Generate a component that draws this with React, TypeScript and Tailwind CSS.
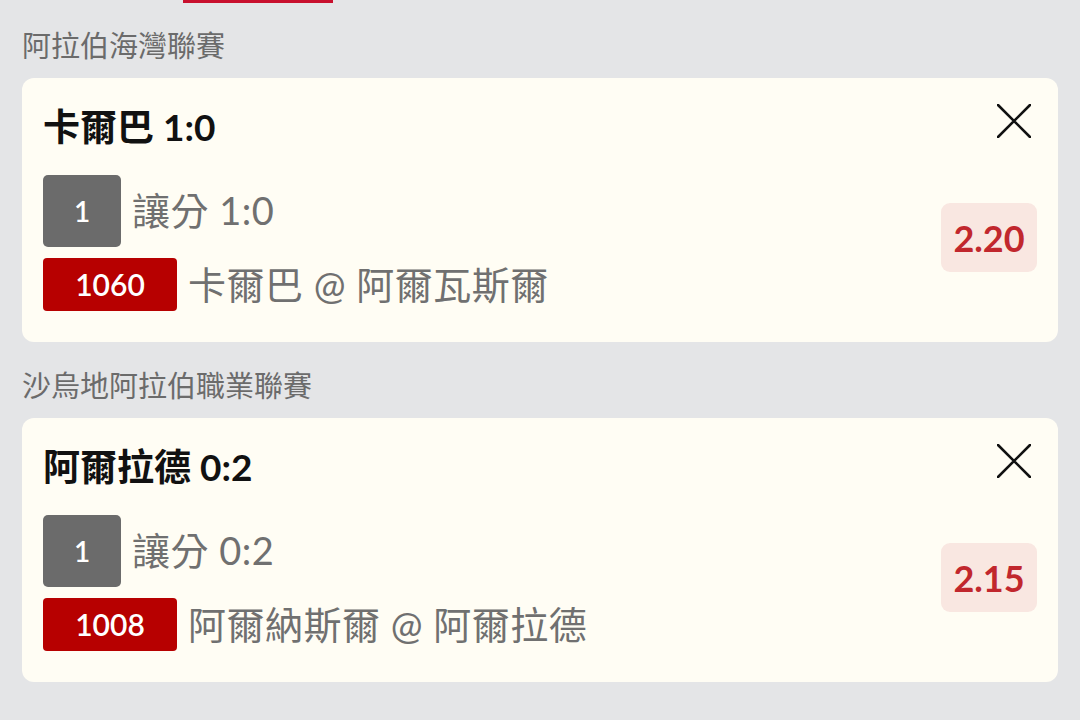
const bets = [
  {
    league: "阿拉伯海灣聯賽",
    title: "卡爾巴 1:0",
    line: "讓分 1:0",
    code: "1060",
    match: "卡爾巴 @ 阿爾瓦斯爾",
    odds: "2.20",
  },
  {
    league: "沙烏地阿拉伯職業聯賽",
    title: "阿爾拉德 0:2",
    line: "讓分 0:2",
    code: "1008",
    match: "阿爾納斯爾 @ 阿爾拉德",
    odds: "2.15",
  },
];

function CloseIcon() {
  return (
    <svg width="34" height="34" viewBox="0 0 34 34" fill="none">
      <path d="M1 1L33 33M33 1L1 33" stroke="#111" strokeWidth="2.6" strokeLinecap="round" />
    </svg>
  );
}

export default function App() {
  return (
    <div
      className="min-h-[720px] bg-[#e4e5e7] px-[22px]"
      style={{ fontFamily: 'Lato, "Noto Sans CJK TC", "Noto Sans", sans-serif' }}
    >
      <div className="ml-[161px] h-[3px] w-[150px] bg-[#c8102e]" />
      {bets.map((bet, i) => (
        <div key={bet.code}>
          <div
            className={`${i === 0 ? "pt-[27px]" : "pt-[28px]"} pb-[16px] text-[29px] leading-[32px] text-[#6b6b6b]`}
          >
            {bet.league}
          </div>
          <div className="flex rounded-[12px] bg-[#fffdf4] pl-[21px] pr-[21px] pt-[24px] pb-[31px]">
            <div className="flex-1">
              <div className="text-[37px] font-bold leading-[50px] text-[#111]">{bet.title}</div>
              <div className="mt-[23px] flex items-center gap-[11px]">
                <div className="flex h-[72px] w-[78px] items-center justify-center rounded-[5px] bg-[#6b6b6b] text-[28px] font-semibold text-white">
                  1
                </div>
                <span className="-mt-[3px] text-[38px] leading-none tracking-[0.5px] text-[#707070]">{bet.line}</span>
              </div>
              <div className="mt-[11px] flex items-center gap-[11px]">
                <div className="flex h-[53px] w-[134px] items-center justify-center rounded-[4px] bg-[#b70000] text-[30px] font-semibold text-white">
                  {bet.code}
                </div>
                <span className="-mt-[2px] text-[38px] leading-none tracking-[0.5px] text-[#707070]">{bet.match}</span>
              </div>
            </div>
            <div className="flex flex-col items-end">
              <div className="mr-[6px] mt-[2px]">
                <CloseIcon />
              </div>
              <div className="mt-[65px] flex h-[69px] w-[96px] items-center justify-center rounded-[9px] bg-[#f9e7e1] text-[36px] font-bold text-[#c1272d]">
                {bet.odds}
              </div>
            </div>
          </div>
        </div>
      ))}
    </div>
  );
}
